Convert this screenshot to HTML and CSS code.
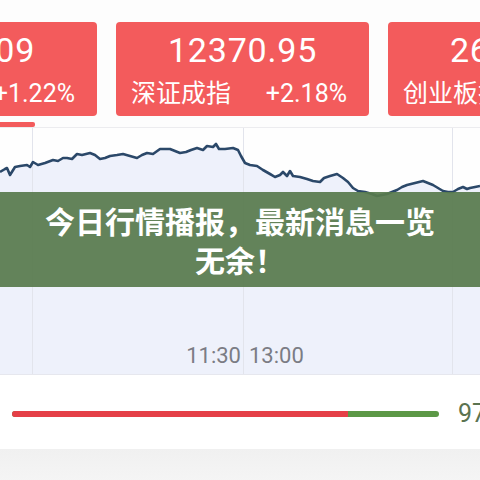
FILE: index.html
```html
<!DOCTYPE html>
<html lang="zh-CN">
<head>
    <meta charset="UTF-8">
    <meta name="viewport" content="width=device-width, initial-scale=1.0">
    <title>今日行情播报</title>
    <link rel="stylesheet" href="styles.css">
</head>
<body>

    <div class="page">
        <div class="index-row">
            <div class="index-card">
                <div class="index-value">3330.09</div>
                <div class="index-meta"><span>上证指数</span><span>+1.22%</span></div>
            </div>
            <div class="index-card">
                <div class="index-value">12370.95</div>
                <div class="index-meta"><span>深证成指</span><span>+2.18%</span></div>
            </div>
            <div class="index-card">
                <div class="index-value">2637.49</div>
                <div class="index-meta"><span>创业板指</span><span>+3.05%</span></div>
            </div>
        </div>
        <div class="tab-indicator"></div>

        <div class="chart">
            <svg class="chart-svg" width="480" height="246" viewBox="0 0 480 246">
                <polygon class="chart-fill" points="0,44 5,41 7,40 10,47 15,39 20,38 27,37 30,39 33,34 38,37 45,35 53,32 58,33 63,30 67,30 72,31 77,26 82,27 90,25 95,27 100,31 105,30 110,28 117,27 123,26 130,28 137,30 142,27 147,25 153,26 160,21 165,21 170,21 175,23 180,25 186,24 191,22 197,20 203,22 207,18 213,19 216,16 219,21 225,21 233,20 238,22 241,28 245,35 250,37 257,38 263,42 270,46 275,49 280,47 283,44 287,48 290,43 293,48 300,49 307,51 313,53 320,54 324,50 330,48 337,46 343,50 348,54 353,60 358,63 365,64 372,66 377,68 382,67 387,66 392,64 397,62 402,59 407,57 415,55 423,53 428,55 433,57 438,60 443,63 448,64 453,64 458,61 463,59 467,61 470,60 475,59 480,58 480,246 0,246"/>
                <line class="grid-line" x1="32.5" y1="0" x2="32.5" y2="246"/>
                <line class="grid-line" x1="243.5" y1="0" x2="243.5" y2="246"/>
                <line class="grid-line" x1="452.5" y1="0" x2="452.5" y2="246"/>
                <polyline class="chart-line" points="0,44 5,41 7,40 10,47 15,39 20,38 27,37 30,39 33,34 38,37 45,35 53,32 58,33 63,30 67,30 72,31 77,26 82,27 90,25 95,27 100,31 105,30 110,28 117,27 123,26 130,28 137,30 142,27 147,25 153,26 160,21 165,21 170,21 175,23 180,25 186,24 191,22 197,20 203,22 207,18 213,19 216,16 219,21 225,21 233,20 238,22 241,28 245,35 250,37 257,38 263,42 270,46 275,49 280,47 283,44 287,48 290,43 293,48 300,49 307,51 313,53 320,54 324,50 330,48 337,46 343,50 348,54 353,60 358,63 365,64 372,66 377,68 382,67 387,66 392,64 397,62 402,59 407,57 415,55 423,53 428,55 433,57 438,60 443,63 448,64 453,64 458,61 463,59 467,61 470,60 475,59 480,58"/>
            </svg>
            <div class="chart-times">
                <span class="time-left">11:30</span>
                <span class="time-right">13:00</span>
            </div>
            <div class="headline">今日行情播报，最新消息一览<br>无余！</div>
        </div>

        <div class="ratio-row">
            <div class="ratio-bar">
                <div class="ratio-up" style="width: 336px;"></div>
            </div>
            <span class="ratio-num">97</span>
        </div>

        <div class="bottom-band"></div>
    </div>

</body>
</html>
```

FILE: styles.css
```css
body {
    margin: 0;
    padding: 0;
    background-color: #fdfdfd;
    font-family: Roboto, "Noto Sans CJK SC", sans-serif;
}
.page {
    width: 480px;
    height: 480px;
    overflow: hidden;
}
.index-row {
    display: flex;
    gap: 19px;
    margin-left: -156px;
    padding-top: 22px;
}
.index-card {
    flex: 0 0 253px;
    height: 94px;
    box-sizing: border-box;
    padding-top: 9px;
    background: #f35b5c;
    border-radius: 4px;
    color: #fff;
}
.index-value {
    text-align: center;
    font-size: 34px;
    line-height: 38px;
    letter-spacing: 0.8px;
}
.index-meta {
    display: flex;
    justify-content: space-between;
    padding: 0 22px 0 15px;
    margin-top: 10px;
    font-size: 25px;
    line-height: 30px;
}
.tab-indicator {
    width: 35px;
    height: 5px;
    margin-top: 6px;
    background: #f35b5c;
    border-radius: 0 2px 2px 0;
}
.chart {
    display: grid;
    position: relative;
    height: 246px;
    border-top: 1px solid #ececef;
    border-bottom: 1px solid #e6e7ee;
    background: #fefefe;
}
.chart-svg {
    grid-area: 1 / 1;
    display: block;
}
.chart-fill {
    fill: #eef1fb;
}
.grid-line {
    stroke: #e2e4ec;
    stroke-width: 1;
}
.chart-line {
    fill: none;
    stroke: #2b4869;
    stroke-width: 2.6;
    stroke-linejoin: round;
}
.chart-times {
    grid-area: 1 / 1;
    align-self: end;
    display: grid;
    grid-template-columns: 243px 1fr;
    padding-bottom: 5px;
    font-size: 22px;
    line-height: 26px;
    color: #7b7c84;
}
.time-left {
    text-align: right;
    padding-right: 2px;
}
.time-right {
    padding-left: 6px;
}
.headline {
    position: absolute;
    left: 0;
    right: 0;
    top: 64px;
    height: 95px;
    box-sizing: border-box;
    padding-top: 9px;
    background: rgba(88, 123, 78, 0.93);
    color: #fff;
    text-align: center;
    font-family: "Noto Sans CJK SC", sans-serif;
    font-weight: 700;
    font-size: 30px;
    line-height: 39px;
}
.ratio-row {
    display: flex;
    align-items: center;
    height: 74px;
    box-sizing: border-box;
    padding: 3px 0 0 12px;
    gap: 19px;
    background: #fff;
}
.ratio-bar {
    flex: 0 0 427px;
    height: 6px;
    border-radius: 3px;
    background: #5c9846;
    overflow: hidden;
}
.ratio-up {
    height: 100%;
    background: #e53f47;
}
.ratio-num {
    font-size: 25px;
    color: #5b7350;
}
.bottom-band {
    height: 40px;
    background: linear-gradient(#f0f0f0, #f6f6f6);
}
```
